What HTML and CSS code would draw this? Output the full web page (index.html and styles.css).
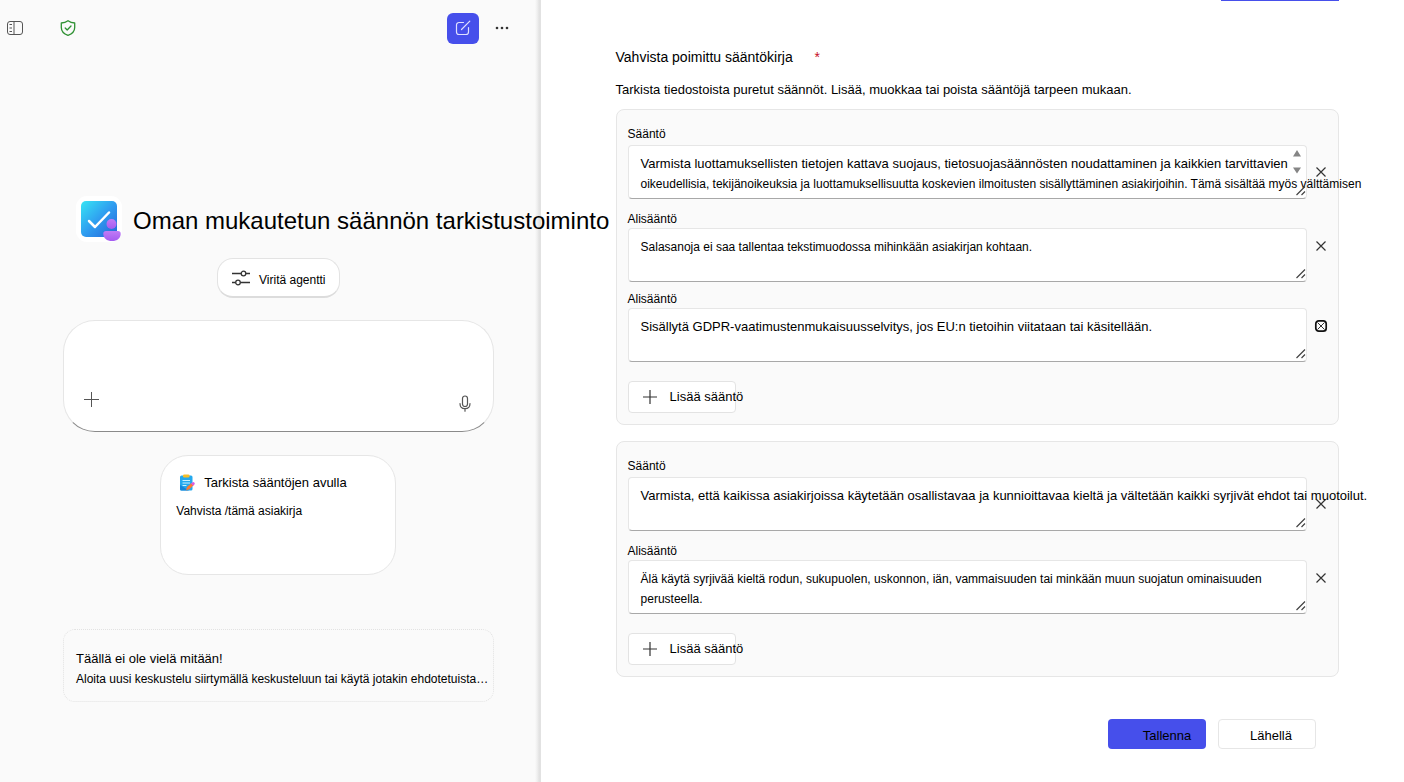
FILE: index.html
```html
<!DOCTYPE html>
<html lang="fi">
<head>
    <meta charset="UTF-8">
    <meta name="viewport" content="width=device-width, initial-scale=1.0">
    <title>Oman mukautetun säännön tarkistustoiminto</title>
    <link rel="stylesheet" href="styles.css">
</head>
<body>
    <aside class="chat">
        <header class="topbar">
            <button class="icon-btn" aria-label="Sivupalkki">
                <svg width="18" height="16" viewBox="0 0 18 16" fill="none" stroke="#555">
                    <rect x="1.5" y="1.5" width="15" height="13" rx="2.5"/>
                    <path d="M8 1.5v13M3.500 4.500h2.500M3.500 8h2.500M3.500 11.500h2.500"/>
                </svg>
            </button>
            <button class="icon-btn shield" aria-label="Suojaus">
                <svg width="18" height="18" viewBox="0 0 18 18" fill="none" stroke="#2f9133" stroke-width="1.300" stroke-linecap="round" stroke-linejoin="round">
                    <path d="M9 1.700c2 1.500 4.200 2.200 6.700 2.300v4.500c0 3.800-2.500 6.400-6.700 7.900-4.200-1.500-6.700-4.100-6.700-7.900V4c2.500-.1 4.700-.8 6.700-2.300z"/>
                    <path d="M6.200 9l2 2 3.800-4"/>
                </svg>
            </button>
            <button class="new-chat" aria-label="Uusi keskustelu">
                <svg width="16" height="16" viewBox="0 0 16 16" fill="none" stroke="#dfe0ff" stroke-width="1.200" stroke-linecap="round">
                    <path d="M8.500 2.500H4A2.500 2.500 0 0 0 1.500 5v7A2.500 2.500 0 0 0 4 14.500h7a2.500 2.500 0 0 0 2.500-2.500V7.500"/>
                    <path d="M6.500 9.500L14.800 1.200"/>
                </svg>
            </button>
            <button class="icon-btn" aria-label="Lisää">
                <svg width="16" height="16" viewBox="0 0 16 16" fill="#333">
                    <circle cx="3" cy="8" r="1.300"/><circle cx="8" cy="8" r="1.300"/><circle cx="13" cy="8" r="1.300"/>
                </svg>
            </button>
        </header>

        <div class="agent">
            <svg class="agent-logo" width="46" height="46" viewBox="0 0 46 46">
                <defs>
                    <linearGradient id="blue" x1="0" y1="0" x2="1" y2="1">
                        <stop offset="0" stop-color="#37e5f4"/>
                        <stop offset=".5" stop-color="#2f9df0"/>
                        <stop offset="1" stop-color="#2563d8"/>
                    </linearGradient>
                    <linearGradient id="purple" x1="0" y1="0" x2="0" y2="1">
                        <stop offset="0" stop-color="#c07bf5"/>
                        <stop offset="1" stop-color="#a45cf0"/>
                    </linearGradient>
                </defs>
                <rect width="46" height="46" rx="11" fill="#fff"/>
                <rect x="5" y="5" width="36" height="36" rx="5" fill="url(#blue)"/>
                <path d="M13 25l6 6 14-14.500" fill="none" stroke="#fff" stroke-width="2.500" stroke-linecap="round" stroke-linejoin="round"/>
                <circle cx="35.500" cy="28" r="5" fill="url(#purple)"/>
                <path d="M30 35h12a2.700 2.700 0 0 1 2.700 2.700c0 4.500-3.500 7.300-8.700 7.300s-8.700-2.800-8.700-7.300A2.700 2.700 0 0 1 30 35z" fill="url(#purple)"/>
            </svg>
            <h1>Oman mukautetun säännön tarkistustoiminto</h1>
        </div>

        <button class="tune">
            <svg width="20" height="20" viewBox="0 0 20 20" fill="none" stroke="#333" stroke-width="1.300">
                <path d="M1 5.500h9M15 5.500h4M1 14.500h3.500M9.500 14.500H19"/>
                <circle cx="12.500" cy="5.500" r="2.300"/><circle cx="7" cy="14.500" r="2.300"/>
            </svg>
            <span>Viritä agentti</span>
        </button>

        <form class="composer">
            <textarea aria-label="Viesti"></textarea>
            <div class="composer-actions">
                <button type="button" class="icon-btn" aria-label="Lisää sisältöä">
                    <svg width="16" height="16" viewBox="0 0 16 16" stroke="#555"><path d="M8.500 1v15M1 8.500h15"/></svg>
                </button>
                <button type="button" class="icon-btn mic" aria-label="Sanele">
                    <svg width="16" height="18" viewBox="0 0 16 18" fill="none" stroke="#555" stroke-width="1.200" stroke-linecap="round">
                        <rect x="5.500" y="1" width="5" height="10.500" rx="2.500"/>
                        <path d="M3 8.500c0 3.200 2 5.200 5 5.200s5-2 5-5.200M8 13.700v2.500"/>
                    </svg>
                </button>
            </div>
        </form>

        <a class="prompt" href="#">
            <span class="prompt-title">
                <svg width="16" height="18" viewBox="0 0 16 18">
                    <rect x="1" y="1.500" width="12.500" height="15" rx="1.500" fill="#24a9ee"/>
                    <path d="M1 11l9 5.500H2.500A1.500 1.500 0 0 1 1 15z" fill="#1684d8"/>
                    <rect x="4" y=".5" width="6.500" height="3" rx="1.200" fill="#f6bd28"/>
                    <path d="M3.500 6.500h7.500M3.500 9h7.500M3.500 11.500h4" stroke="#c9f1ff"/>
                    <path d="M7 16.500l1-3.500 4.500-4 2 2.300-4.300 4z" fill="#fb7a34"/>
                    <path d="M12 9.500l1.300-1.100a1.500 1.500 0 0 1 2.100 2.100L14.200 11.700z" fill="#d95be0"/>
                </svg>
                Tarkista sääntöjen avulla
            </span>
            <span class="prompt-text">Vahvista /tämä asiakirja</span>
        </a>

        <section class="empty">
            <h2>Täällä ei ole vielä mitään!</h2>
            <p>Aloita uusi keskustelu siirtymällä keskusteluun tai käytä jotakin ehdotetuista…</p>
        </section>
    </aside>

    <main class="rules">
        <div class="cut-bar"><button class="cut-btn" aria-label="Lataa"></button></div>
        <h2 class="rules-title">Vahvista poimittu sääntökirja <span class="required">*</span></h2>
        <p class="rules-intro">Tarkista tiedostoista puretut säännöt. Lisää, muokkaa tai poista sääntöjä tarpeen mukaan.</p>

        <section class="card">
            <div class="rule main">
                <label for="rule1">Sääntö</label>
                <div class="row">
                    <div class="field">
                        <textarea id="rule1" class="wide long">Varmista luottamuksellisten tietojen kattava suojaus, tietosuojasäännösten noudattaminen ja kaikkien tarvittavien
oikeudellisia, tekijänoikeuksia ja luottamuksellisuutta koskevien ilmoitusten sisällyttäminen asiakirjoihin. Tämä sisältää myös välttämisen</textarea>
                        <svg class="scroll" width="16" height="32" viewBox="0 0 16 32" fill="#858585"><path d="M8 4l4 6.500H4zM8 27.500l4-6H4z"/></svg>
                        <svg class="grip" width="10" height="10" viewBox="0 0 10 10" stroke="#444" stroke-width="1.200"><path d="M.5 9L9 .5M5.500 9L9 5.500"/></svg>
                    </div>
                    <button class="remove" aria-label="Poista sääntö"><svg width="16" height="16" viewBox="0 0 16 16" stroke="#333" stroke-width="1.200"><path d="M3.500 3.500l9 9M12.500 3.500l-9 9"/></svg></button>
                </div>
            </div>
            <div class="rule">
                <label for="rule1a">Alisääntö</label>
                <div class="row">
                    <div class="field">
                        <textarea id="rule1a" class="small">Salasanoja ei saa tallentaa tekstimuodossa mihinkään asiakirjan kohtaan.</textarea>
                        <svg class="grip" width="10" height="10" viewBox="0 0 10 10" stroke="#444" stroke-width="1.200"><path d="M.5 9L9 .5M5.500 9L9 5.500"/></svg>
                    </div>
                    <button class="remove" aria-label="Poista alisääntö"><svg width="16" height="16" viewBox="0 0 16 16" stroke="#333" stroke-width="1.200"><path d="M3.500 3.500l9 9M12.500 3.500l-9 9"/></svg></button>
                </div>
            </div>
            <div class="rule">
                <label for="rule1b">Alisääntö</label>
                <div class="row">
                    <div class="field">
                        <textarea id="rule1b">Sisällytä GDPR-vaatimustenmukaisuusselvitys, jos EU:n tietoihin viitataan tai käsitellään.</textarea>
                        <svg class="grip" width="10" height="10" viewBox="0 0 10 10" stroke="#444" stroke-width="1.200"><path d="M.5 9L9 .5M5.500 9L9 5.500"/></svg>
                    </div>
                    <button class="remove" aria-label="Poista alisääntö"><svg width="16" height="16" viewBox="0 0 16 16" fill="none" stroke="#333"><rect x="2.800" y="2.800" width="10.400" height="10.400" rx="3" stroke="#111" stroke-width="1.700"/><path d="M4.500 4.500l7 7M11.500 4.500l-7 7"/></svg></button>
                </div>
            </div>
            <button class="add">
                <svg width="16" height="16" viewBox="0 0 16 16" stroke="#333" stroke-width="1.200"><path d="M8 1v14M1 8h14"/></svg>
                Lisää sääntö
            </button>
        </section>

        <section class="card">
            <div class="rule main">
                <label for="rule2">Sääntö</label>
                <div class="row">
                    <div class="field">
                        <textarea id="rule2" class="wide">Varmista, että kaikissa asiakirjoissa käytetään osallistavaa ja kunnioittavaa kieltä ja vältetään kaikki syrjivät ehdot tai muotoilut.</textarea>
                        <svg class="grip" width="10" height="10" viewBox="0 0 10 10" stroke="#444" stroke-width="1.200"><path d="M.5 9L9 .5M5.500 9L9 5.500"/></svg>
                    </div>
                    <button class="remove" aria-label="Poista sääntö"><svg width="16" height="16" viewBox="0 0 16 16" stroke="#333" stroke-width="1.200"><path d="M3.500 3.500l9 9M12.500 3.500l-9 9"/></svg></button>
                </div>
            </div>
            <div class="rule">
                <label for="rule2a">Alisääntö</label>
                <div class="row">
                    <div class="field">
                        <textarea id="rule2a" class="small">Älä käytä syrjivää kieltä rodun, sukupuolen, uskonnon, iän, vammaisuuden tai minkään muun suojatun ominaisuuden perusteella.</textarea>
                        <svg class="grip" width="10" height="10" viewBox="0 0 10 10" stroke="#444" stroke-width="1.200"><path d="M.5 9L9 .5M5.500 9L9 5.500"/></svg>
                    </div>
                    <button class="remove" aria-label="Poista alisääntö"><svg width="16" height="16" viewBox="0 0 16 16" stroke="#333" stroke-width="1.200"><path d="M3.500 3.500l9 9M12.500 3.500l-9 9"/></svg></button>
                </div>
            </div>
            <button class="add">
                <svg width="16" height="16" viewBox="0 0 16 16" stroke="#333" stroke-width="1.200"><path d="M8 1v14M1 8h14"/></svg>
                Lisää sääntö
            </button>
        </section>

        <footer class="actions">
            <button class="save">Tallenna</button>
            <button class="close">Lähellä</button>
        </footer>
    </main>
</body>
</html>
```
FILE: styles.css
```css
* {
    margin: 0;
    padding: 0;
    box-sizing: border-box;
}

body {
    display: flex;
    min-height: 100vh;
    background-color: #fff;
    color: #000;
    font-family: "Liberation Sans", Arial, sans-serif;
    font-size: 13px;
    line-height: 20px;
    overflow-x: hidden;
}

button,
textarea {
    font: inherit;
    color: inherit;
}

button {
    border: none;
    background: none;
    cursor: pointer;
}

svg {
    display: block;
    flex-shrink: 0;
}

h1,
h2 {
    font-weight: normal;
}

/* Chat */
.chat {
    display: flex;
    flex-direction: column;
    flex-shrink: 0;
    width: 38.5%;
    z-index: 1;
    padding: 12px 47px 0 63px;
    background: linear-gradient(to left, #e2e2e2 2px, #ebebeb 3px, #fafafa 6px);
}

.topbar {
    display: flex;
    align-items: center;
    height: 32px;
    margin: 0 -16px 0 -57px;
}

.shield {
    margin-left: 35px;
}

.new-chat {
    display: flex;
    align-items: center;
    justify-content: center;
    width: 32px;
    height: 31px;
    margin-left: auto;
    margin-right: 15px;
    border-radius: 6px;
    background-color: #464feb;
}

.agent {
    display: flex;
    align-items: center;
    gap: 11px;
    margin-top: 152px;
    padding-left: 13px;
}

.agent h1 {
    padding-top: 4px;
    font-size: 24px;
    line-height: 32px;
    white-space: nowrap;
}

.tune {
    display: flex;
    align-items: center;
    align-self: center;
    gap: 8px;
    height: 40px;
    margin-top: 16px;
    padding: 0 13px;
    border: 1px solid #e3e3e3;
    border-bottom: 2px solid #dcdcdc;
    border-radius: 16px;
    background-color: #fff;
    font-size: 12px;
}

.tune span {
    padding-top: 4px;
}

.composer {
    display: flex;
    flex-direction: column;
    height: 112px;
    margin-top: 22px;
    padding: 16px 20px 14px 19px;
    border: 1px solid #e6e6e6;
    border-bottom-color: #8a8a8a;
    border-radius: 32px;
    background-color: #fff;
}

.composer textarea {
    flex: 1;
    min-height: 0;
    border: none;
    outline: none;
    background: none;
    resize: none;
}

.composer-actions {
    display: flex;
    align-items: flex-start;
    justify-content: space-between;
    height: 26px;
}

.mic {
    padding-top: 4px;
}

.prompt {
    display: flex;
    flex-direction: column;
    align-self: center;
    gap: 8px;
    width: 236px;
    height: 120px;
    margin-top: 23px;
    padding: 17px 15px;
    border: 1px solid #e6e6e6;
    border-radius: 28px;
    background-color: #fff;
    color: inherit;
    text-decoration: none;
}

.prompt-title {
    display: flex;
    align-items: center;
    gap: 9px;
    padding-left: 3px;
}

.prompt-text {
    font-size: 12px;
}

.empty {
    margin-top: 54px;
    padding: 19px 12px 12px;
    border: 1px dotted #e2e2e2;
    border-radius: 12px;
}

.empty h2 {
    font-size: 13px;
}

.empty p {
    font-size: 12px;
    white-space: nowrap;
}

/* Rules */
.rules {
    flex: 1;
    min-width: 0;
    padding: 0 65px 32px 75px;
}

.cut-bar {
    display: flex;
    justify-content: flex-end;
    height: 1px;
    overflow: hidden;
}

.cut-btn {
    width: 118px;
    background-color: #464feb;
}

.rules-title {
    margin-top: 46px;
    font-size: 14px;
}

.required {
    margin-left: 18px;
    color: #c50f1f;
}

.rules-intro {
    margin: 13px 0 9px;
}

.card {
    margin-bottom: 16px;
    padding: 15px 9px 11px 11px;
    border: 1px solid #e6e6e6;
    border-radius: 8px;
    background-color: #fafafa;
}

.rule {
    margin-bottom: 6px;
}

.rule label {
    display: block;
    height: 20px;
    padding-top: 1px;
    font-size: 12px;
}

.main {
    margin-bottom: 9px;
}

.main label {
    padding-top: 0;
    line-height: 18px;
}

.row {
    display: flex;
    gap: 6px;
}

.field {
    position: relative;
    flex: 1;
    height: 54px;
    border: 1px solid #e6e6e6;
    border-bottom-color: #a8a8a8;
    border-radius: 4px;
    background-color: #fff;
}

.field textarea {
    display: block;
    width: 100%;
    height: 52px;
    padding: 8px 12px 0;
    border: none;
    outline: none;
    background: none;
    resize: none;
    overflow: hidden;
}

.field .small {
    font-size: 12px;
}

/* long lines run past the frame */
.field .wide {
    width: calc(100% + 90px);
    white-space: pre;
}

.field .long {
    font-size: 12px;
}

.field .long::first-line {
    font-size: 13px;
}

.scroll {
    position: absolute;
    top: 0;
    right: 1px;
}

.grip {
    position: absolute;
    right: 0;
    bottom: 2px;
}

.remove {
    align-self: flex-start;
    margin-top: 10px;
}

.main .remove {
    align-self: center;
    margin-top: 0;
}

.add {
    display: flex;
    align-items: center;
    gap: 12px;
    width: 108px;
    height: 32px;
    margin-top: 19px;
    padding-left: 13px;
    border: 1px solid #e3e3e3;
    border-radius: 4px;
    background-color: #fff;
    white-space: nowrap;
}

.actions {
    display: flex;
    justify-content: flex-end;
    gap: 12px;
    margin-top: 42px;
    padding-right: 23px;
}

.actions button {
    width: 98px;
    height: 30px;
    padding: 4px 0 0 20px;
    border-radius: 4px;
}

.save {
    background-color: #464feb;
}

.actions .close {
    padding-left: 8px;
    border: 1px solid #e6e6e6;
    background-color: #fff;
}
```
